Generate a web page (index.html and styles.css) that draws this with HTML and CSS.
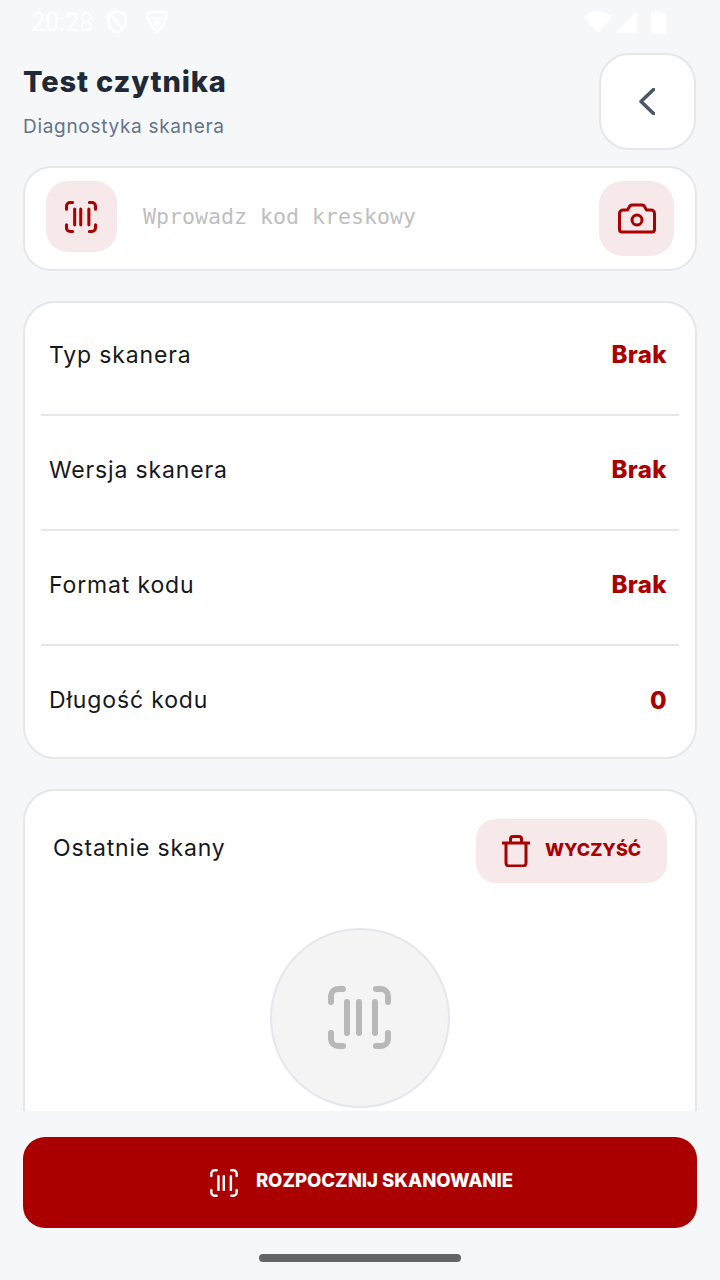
FILE: index.html
```html
<!DOCTYPE html>
<html lang="pl">
<head>
    <meta charset="UTF-8">
    <meta name="viewport" content="width=device-width, initial-scale=1.0">
    <title>Test czytnika</title>
    <link rel="stylesheet" href="styles.css">
</head>
<body>
    <svg class="defs" width="0" height="0">
        <symbol id="scan" viewBox="0 0 63 63">
            <path d="M3 16V10a7 7 0 0 1 7-7h5M3 47v6a7 7 0 0 0 7 7h5M48 3h5a7 7 0 0 1 7 7v6M48 60h5a7 7 0 0 0 7-7v-6M19 16v31M31 16v31M47 16v31"/>
        </symbol>
    </svg>

    <div class="page">
        <div class="status-bar">
            <span class="clock">20:28</span>
            <svg class="status-shield" width="20" height="24" viewBox="0 0 20 24"><path d="M10 1.500 18.500 4v8c0 5-3.500 8.500-8.500 10.500C5 20.500 1.500 17 1.500 12V4zM4 5l11 14"/></svg>
            <svg class="status-vpn" width="24" height="24" viewBox="0 0 24 24"><path d="M4 2h16a2 2 0 0 1 2 2.500c-1 6-4 12-10 17.500C6 16.500 3 10.500 2 4.500A2 2 0 0 1 4 2zM6 8h12M9 12h6l-3 4z"/></svg>
            <span class="status-gap"></span>
            <svg width="28" height="24" viewBox="0 0 28 24"><path class="solid" d="M0 7C4 3 9 1 14 1s10 2 14 6L14 23z"/></svg>
            <svg class="status-signal" width="24" height="24" viewBox="0 0 24 24"><path class="solid" d="M23 1v22H1z"/></svg>
            <svg class="status-battery" width="15" height="24" viewBox="0 0 15 24"><path class="solid" d="M4 3V1h7v2h2a2 2 0 0 1 2 2v17a2 2 0 0 1-2 2H2a2 2 0 0 1-2-2V5a2 2 0 0 1 2-2z"/></svg>
        </div>

        <header class="top">
            <div class="top-text">
                <h1>Test czytnika</h1>
                <p>Diagnostyka skanera</p>
            </div>
            <button class="back">
                <svg width="16" height="27" viewBox="0 0 16 27"><path d="M14.500 1.500 2 13.500l12.500 12"/></svg>
            </button>
        </header>

        <main class="content">
            <div class="card input-card">
                <div class="icon-box"><svg class="scan-icon"><use href="#scan"/></svg></div>
                <span class="placeholder">Wprowadz kod kreskowy</span>
                <button class="camera">
                    <svg width="38" height="31" viewBox="0 0 38 31"><path d="M5 7h4.500l2-3.500A3 3 0 0 1 14 2h10a3 3 0 0 1 2.500 1.500l2 3.500H33a3.500 3.500 0 0 1 3.500 3.500v16a2.500 2.500 0 0 1-2.500 2.500H4a2.500 2.500 0 0 1-2.500-2.500v-16A3.500 3.500 0 0 1 5 7z"/><circle cx="19" cy="17" r="5"/></svg>
                </button>
            </div>

            <section class="card info-card">
                <div class="info-row"><span>Typ skanera</span><b>Brak</b></div>
                <div class="info-row"><span>Wersja skanera</span><b>Brak</b></div>
                <div class="info-row"><span>Format kodu</span><b>Brak</b></div>
                <div class="info-row"><span>Długość kodu</span><b>0</b></div>
            </section>

            <section class="card recent-card">
                <div class="recent-head">
                    <span class="recent-title">Ostatnie skany</span>
                    <button class="clear">
                        <svg width="28" height="32" viewBox="0 0 28 32"><path d="M1 8h26M4 8v20a3 3 0 0 0 3 3h14a3 3 0 0 0 3-3V8M8.500 8V4a2.500 2.500 0 0 1 2.500-2.500h6A2.500 2.500 0 0 1 19.500 4v4"/></svg>
                        <span>WYCZYŚĆ</span>
                    </button>
                </div>
                <div class="empty-circle"><svg class="scan-big"><use href="#scan"/></svg></div>
            </section>
        </main>

        <footer class="bottom">
            <button class="start">
                <svg class="scan-small"><use href="#scan"/></svg>
                <span>ROZPOCZNIJ SKANOWANIE</span>
            </button>
            <div class="home-bar"></div>
        </footer>
    </div>
</body>
</html>
```

FILE: styles.css
```css
* {
    box-sizing: border-box;
}
body {
    margin: 0;
    background-color: #f6f7f9;
    font-family: Inter, "Noto Sans", sans-serif;
    color: #17181c;
}
button {
    font-family: inherit;
    border: none;
    cursor: pointer;
    padding: 0;
}
svg {
    display: block;
    fill: none;
    stroke-linecap: round;
    stroke-linejoin: round;
}
.defs {
    position: absolute;
}
.page {
    width: 720px;
    height: 1280px;
    display: flex;
    flex-direction: column;
    overflow: hidden;
}
.status-bar {
    height: 44px;
    flex-shrink: 0;
    display: flex;
    align-items: center;
    padding: 0 54px 0 31px;
    color: #fff;
}
.status-bar svg {
    stroke: #fff;
    stroke-width: 2.500;
}
.status-bar .solid {
    fill: #fff;
    stroke: none;
}
.clock {
    font-family: Roboto, sans-serif;
    font-size: 25px;
}
.status-shield {
    margin-left: 14px;
}
.status-vpn {
    margin-left: 18px;
}
.status-gap {
    flex: 1;
}
.status-signal {
    margin-left: 2px;
}
.status-battery {
    margin-left: 13px;
}
.top {
    height: 122px;
    flex-shrink: 0;
    display: flex;
    justify-content: space-between;
    align-items: flex-start;
    padding: 9px 24px 0 23px;
}
.top-text {
    padding-top: 11px;
}
h1 {
    margin: 0;
    font-size: 29px;
    line-height: 36px;
    font-weight: 800;
    letter-spacing: 0.85px;
    color: #1f2937;
}
.top-text p {
    margin: 14px 0 0;
    font-size: 19px;
    line-height: 26px;
    letter-spacing: 0.7px;
    color: #64748b;
}
.back {
    width: 97px;
    height: 97px;
    padding-right: 1px;
    border: 2px solid #e5e7eb;
    border-radius: 30px;
    background-color: #fff;
    display: flex;
    align-items: center;
    justify-content: center;
}
.back svg {
    stroke: #4b5563;
    stroke-width: 3.500;
}
.content {
    flex: 1;
    min-height: 0;
    overflow: hidden;
    padding: 0 23px;
    display: flex;
    flex-direction: column;
    gap: 30px;
}
.card {
    flex-shrink: 0;
    background-color: #fff;
    border: 2px solid #e5e7eb;
}
.input-card {
    height: 105px;
    border-radius: 28px;
    display: flex;
    align-items: flex-start;
    padding: 13px 21px 0;
}
.icon-box {
    width: 71px;
    height: 71px;
    border-radius: 22px;
    background-color: #f7e9ea;
    display: flex;
    align-items: center;
    justify-content: center;
}
.scan-icon {
    width: 32px;
    height: 32px;
    margin-right: 2px;
    stroke: #aa0000;
    stroke-width: 6;
}
.placeholder {
    flex: 1;
    margin-left: 26px;
    font-family: "DejaVu Sans Mono", monospace;
    font-size: 21.600px;
    line-height: 71px;
    color: #bfbfbf;
}
.camera {
    width: 75px;
    height: 75px;
    border-radius: 24px;
    background-color: #f7e9ea;
    display: flex;
    align-items: center;
    justify-content: center;
}
.camera svg {
    stroke: #aa0000;
    stroke-width: 3;
}
.info-card {
    height: 458px;
    border-radius: 32px;
    padding: 0 16px;
}
.info-row {
    height: 115px;
    display: flex;
    align-items: center;
    justify-content: space-between;
    padding: 0 12px 6px 8px;
    border-bottom: 2px solid #e5e7eb;
    font-size: 23px;
    letter-spacing: 0.85px;
}
.info-row:first-child {
    height: 113px;
    padding-bottom: 8px;
}
.info-row:last-child {
    border-bottom: none;
    height: 110px;
    padding-bottom: 2px;
}
.info-row b {
    color: #aa0000;
    font-size: 24px;
    font-weight: 800;
    letter-spacing: 0.4px;
}
.recent-card {
    height: 400px;
    border-radius: 32px 32px 0 0;
    padding: 28px 28px 0;
}
.recent-head {
    display: flex;
    justify-content: space-between;
    align-items: center;
}
.recent-title {
    padding-bottom: 6px;
    font-size: 23px;
    letter-spacing: 0.85px;
}
.clear {
    width: 191px;
    height: 64px;
    border-radius: 20px;
    background-color: #f7e9ea;
    color: #aa0000;
    display: flex;
    align-items: center;
    gap: 15px;
    padding-left: 26px;
    font-size: 18px;
    font-weight: 800;
}
.clear span {
    padding-bottom: 3px;
}
.clear svg {
    stroke: #aa0000;
    stroke-width: 3;
}
.empty-circle {
    width: 180px;
    height: 180px;
    margin: 45px auto 0;
    border-radius: 50%;
    border: 2px solid #e5e7eb;
    background-color: #f4f4f4;
    display: flex;
    align-items: center;
    justify-content: center;
}
.scan-big {
    width: 63px;
    height: 63px;
    margin: 0 2px 2px 0;
    stroke: #b8b8b8;
    stroke-width: 6;
}
.bottom {
    height: 169px;
    flex-shrink: 0;
    padding: 26px 23px 0;
    background-color: #f6f7f9;
}
.start {
    width: 100%;
    height: 91px;
    padding-left: 3px;
    border-radius: 22px;
    background-color: #aa0000;
    color: #fff;
    display: flex;
    align-items: center;
    justify-content: center;
    gap: 18px;
    font-size: 18.500px;
    font-weight: 800;
}
.start span {
    padding-bottom: 5px;
}
.scan-small {
    width: 28px;
    height: 28px;
    stroke: #fff;
    stroke-width: 5.500;
}
.home-bar {
    width: 202px;
    height: 8px;
    margin: 26px auto 0;
    border-radius: 4px;
    background-color: #636466;
}
```
